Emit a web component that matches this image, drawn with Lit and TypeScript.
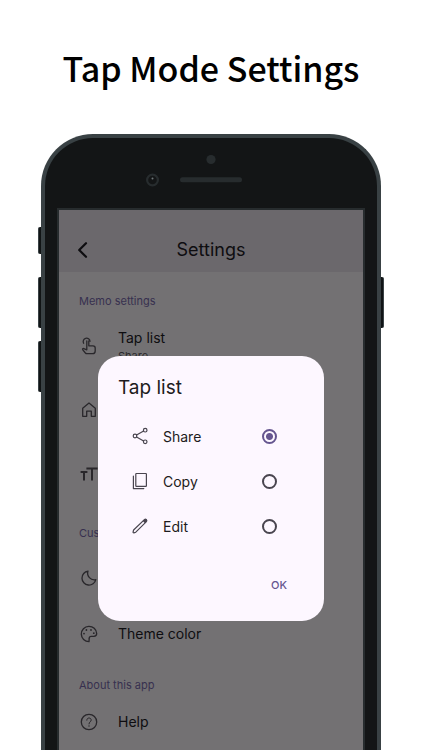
import { LitElement, html, css, svg, SVGTemplateResult } from "lit";
import { customElement, state } from "lit/decorators.js";

const icons: Record<string, SVGTemplateResult> = {
  touch: svg`<path d="M4.6 7.2A3.4 3.4 0 1 1 11 5.4"/><path d="M7.8 5V13.8L4.8 12.6C3.9 12.3 3.2 13 3.8 13.8L6.4 17Q7 17.7 7.8 17.7H13.6Q16.2 17.7 16.2 15V12Q16.2 9.8 14 9.8H9.8V5"/>`,
  home: svg`<path d="M3.7 16.3V8.2L10 3.1L16.3 8.2V16.3H12.3V11.2H7.7V16.3Z"/>`,
  size: svg`<path class="heavy" d="M1.6 8H8.4M5 8V16.4M7.4 4.4H18.6M13 4.4V16.4"/>`,
  moon: svg`<path d="M9 3.1A7 7 0 1 0 16.8 11.6A6.6 6.6 0 0 1 9 3.1Z"/>`,
  palette: svg`<path d="M10 17.7A7.7 7.7 0 1 1 17.7 9.6C17.7 11.6 16.4 12.4 14.9 12.4H12.2C10.8 12.4 10.2 13.4 10.2 14.4Z"/><g class="solid"><circle cx="5" cy="9.6" r="0.9"/><circle cx="7.4" cy="6" r="0.9"/><circle cx="12" cy="6" r="0.9"/><circle cx="14.8" cy="9.2" r="0.9"/></g>`,
  help: svg`<circle cx="10" cy="10" r="7.7"/><path class="fine" d="M7.8 8.2C7.8 6.8 8.8 6 10 6S12.2 6.8 12.2 8C12.2 9.8 10 9.8 10 11.9"/><circle class="solid" cx="10" cy="14" r="0.7"/>`,
  share: svg`<circle cx="5" cy="10" r="1.8"/><circle cx="15.2" cy="4.2" r="1.8"/><circle cx="15.2" cy="15.8" r="1.8"/><path d="M6.6 9.1L13.6 5.1M6.6 10.9L13.6 14.9"/>`,
  copy: svg`<rect x="5.8" y="2.5" width="10.6" height="12.8" rx="0.6"/><path d="M3.4 5.2V17.6H13.8"/>`,
  edit: svg`<path d="M3.6 14L14.4 3.6Q15.4 2.8 16.4 3.6Q17.2 4.6 16.4 5.6L5.8 16.2L3.9 16.9Q3 17 3.1 16Z"/><path class="solid" d="M12.8 5.1L14.2 3.4Q15.4 2.4 16.6 3.4Q17.6 4.6 16.6 5.8L14.9 7.2Z"/>`,
};

const icon = (name: string) =>
  html`<svg class="icon" viewBox="0 0 20 20" aria-hidden="true">${icons[name]}</svg>`;

@customElement("app-root")
export class AppRoot extends LitElement {
  @state() private mode = "Share";

  static styles = css`
    * {
      box-sizing: border-box;
    }
    :host {
      display: flex;
      flex-direction: column;
      height: 100vh;
      overflow: hidden;
      background: #fff;
      font-family: Inter, "Liberation Sans", sans-serif;
      color: #0e0d10;
    }
    h1, h2, h3, p {
      margin: 0;
      font-weight: 400;
    }
    .headline {
      padding: 42px 0 40px;
      font: 500 34px/52px "Noto Sans CJK JP", "Noto Sans", sans-serif;
      text-align: center;
      color: #000;
    }
    .device {
      flex: 1;
      min-height: 0;
      display: flex;
      padding: 0 38px;
    }
    .keys {
      flex: none;
      width: 3px;
      padding-top: 93px;
      display: flex;
      flex-direction: column;
    }
    .keys.right {
      padding-top: 143px;
    }
    .key {
      height: 51px;
      margin-bottom: 13px;
      background: #101415;
      border-left: 1px solid #3a4245;
      border-radius: 2px 0 0 2px;
    }
    .key.short {
      height: 27px;
      margin-bottom: 23px;
    }
    .right .key {
      border-left: 0;
      border-right: 1px solid #3a4245;
      border-radius: 0 2px 2px 0;
    }
    .body {
      flex: 1;
      min-width: 0;
      display: flex;
      flex-direction: column;
      padding: 0 12px;
      border: 4px solid #394144;
      border-bottom: 0;
      border-radius: 52px 52px 0 0;
      background: #131516;
    }
    .sensors {
      flex: none;
      height: 70px;
      display: flex;
      justify-content: center;
      padding-top: 14px;
    }
    .sensors svg {
      width: 132px;
      height: 38px;
    }
    .screen {
      flex: 1;
      min-height: 0;
      position: relative;
      border: 2px solid #272c2e;
      border-bottom: 0;
      background: #737173;
    }
    .bar {
      display: grid;
      grid-template-columns: 48px 1fr 48px;
      align-items: center;
      height: 62px;
      padding-top: 17px;
      background: #6b686c;
    }
    .bar h2 {
      font-size: 18px;
      line-height: 24px;
      text-align: center;
    }
    button {
      border: 0;
      background: none;
      font-family: inherit;
      color: inherit;
      cursor: pointer;
    }
    .back {
      height: 40px;
      padding: 0;
      display: grid;
      place-items: center;
    }
    .back svg {
      width: 20px;
      height: 20px;
      fill: none;
      stroke: currentColor;
      stroke-width: 2.2;
      stroke-linecap: round;
      stroke-linejoin: round;
    }
    .list {
      padding: 2px 20px 0;
    }
    .list h3 {
      height: 40px;
      padding-top: 17px;
      font-size: 11px;
      line-height: 20px;
      color: #37304f;
    }
    .row {
      display: flex;
      align-items: center;
      gap: 19px;
      height: 48px;
    }
    .row.tall {
      height: 64px;
    }
    .row .name {
      font-size: 14px;
      line-height: 20px;
    }
    .row .value {
      font-size: 11px;
      line-height: 16px;
      color: #2b292d;
    }
    .icon {
      flex: none;
      width: 20px;
      height: 20px;
      fill: none;
      stroke: #29272b;
      stroke-width: 1.3;
      stroke-linejoin: round;
      stroke-linecap: round;
    }
    .icon .solid {
      fill: #29272b;
      stroke: none;
    }
    .icon .heavy {
      stroke-width: 2;
      stroke-linecap: butt;
    }
    .icon .fine {
      stroke-width: 1;
    }
    .overlay {
      position: absolute;
      inset: 0;
      display: flex;
      align-items: center;
      padding: 16px 39px 0;
    }
    .dialog {
      flex: 1;
      min-width: 0;
      padding: 20px;
      border-radius: 22px;
      background: #fdf7ff;
      color: #1d1b20;
    }
    .dialog h2 {
      font-size: 19px;
      line-height: 24px;
      margin-bottom: 14px;
    }
    .option {
      display: flex;
      align-items: center;
      gap: 13px;
      height: 45px;
      padding: 0 27px 0 12px;
      font-size: 14px;
      cursor: pointer;
    }
    .option span {
      flex: 1;
    }
    .dialog .icon {
      stroke: #49454f;
      stroke-width: 1.2;
    }
    .dialog .icon .solid {
      fill: #49454f;
    }
    .option input {
      appearance: none;
      flex: none;
      width: 15px;
      height: 15px;
      margin: 0;
      border: 2px solid #49454f;
      border-radius: 50%;
    }
    .option input:checked {
      border-color: #65558f;
      background: radial-gradient(circle, #65558f 3px, transparent 4px);
    }
    .actions {
      display: flex;
      justify-content: flex-end;
      padding-top: 20px;
    }
    .ok {
      height: 32px;
      padding: 0 17px;
      font-size: 11px;
      font-weight: 500;
      color: #65558f;
    }
  `;

  private option(label: string, glyph: string) {
    return html`<label class="option">
      ${icon(glyph)}<span>${label}</span>
      <input type="radio" name="mode" .checked=${this.mode === label} @change=${() => (this.mode = label)} />
    </label>`;
  }

  render() {
    return html`
      <h1 class="headline">Tap Mode Settings</h1>
      <div class="device">
        <div class="keys">
          <div class="key short"></div>
          <div class="key"></div>
          <div class="key"></div>
        </div>
        <div class="body">
          <div class="sensors">
            <svg viewBox="0 0 132 38" aria-hidden="true">
              <circle cx="66" cy="7.5" r="4.6" fill="#272c2e" />
              <circle cx="7.5" cy="28" r="5.4" fill="#131516" stroke="#272c2e" stroke-width="2.2" />
              <circle cx="7.5" cy="26.5" r="1" fill="#71787a" />
              <rect x="35" y="25.2" width="62" height="5" rx="2.5" fill="#272c2e" />
            </svg>
          </div>
          <div class="screen">
            <div class="bar">
              <button class="back" aria-label="Back">
                <svg viewBox="0 0 20 20"><path d="M13 3.2L6.2 10L13 16.8" /></svg>
              </button>
              <h2>Settings</h2>
            </div>
            <div class="list">
              <h3>Memo settings</h3>
              <div class="row tall">
                ${icon("touch")}
                <div>
                  <p class="name">Tap list</p>
                  <p class="value">${this.mode}</p>
                </div>
              </div>
              <div class="row tall">${icon("home")}</div>
              <div class="row tall">${icon("size")}</div>
              <h3>Customize</h3>
              <div class="row tall">${icon("moon")}</div>
              <div class="row">${icon("palette")}<p class="name">Theme color</p></div>
              <h3>About this app</h3>
              <div class="row">${icon("help")}<p class="name">Help</p></div>
            </div>
            <div class="overlay">
              <div class="dialog" role="dialog" aria-labelledby="dialog-title">
                <h2 id="dialog-title">Tap list</h2>
                ${this.option("Share", "share")}
                ${this.option("Copy", "copy")}
                ${this.option("Edit", "edit")}
                <div class="actions"><button class="ok">OK</button></div>
              </div>
            </div>
          </div>
        </div>
        <div class="keys right"><div class="key"></div></div>
      </div>
    `;
  }
}
